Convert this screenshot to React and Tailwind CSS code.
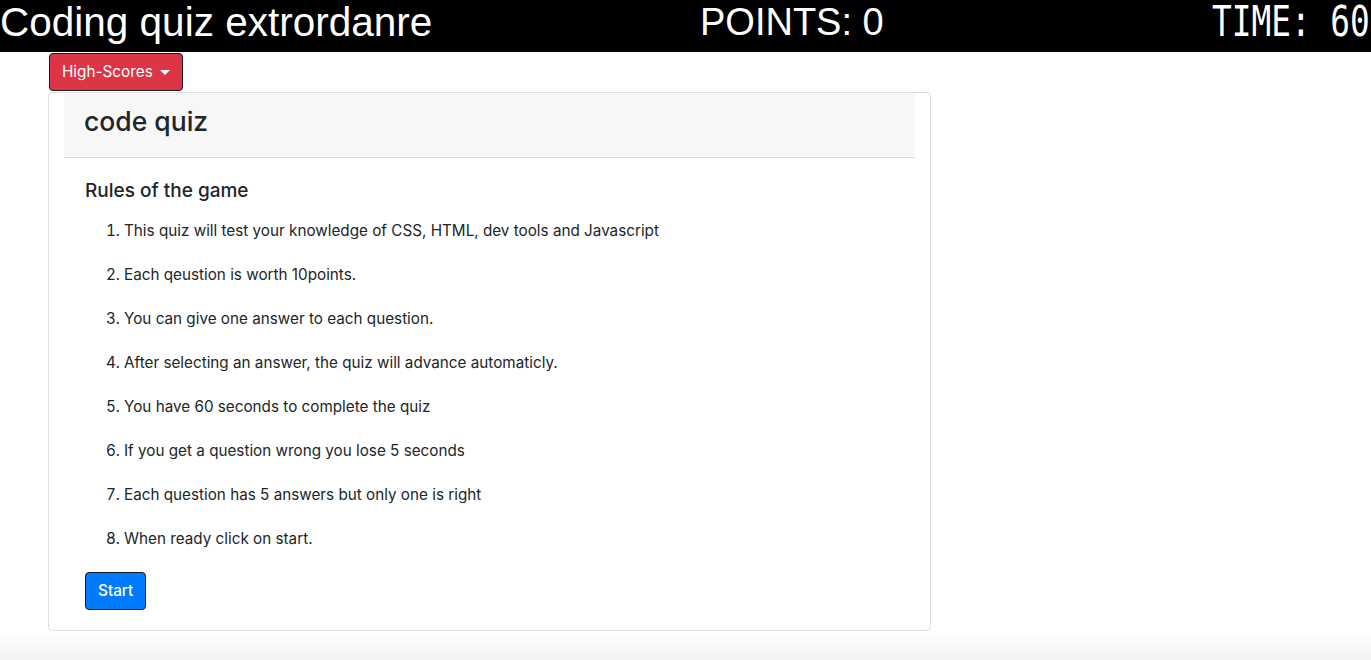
import React from 'react';

const rules = [
    'This quiz will test your knowledge of CSS, HTML, dev tools and Javascript',
    'Each qeustion is worth 10points.',
    'You can give one answer to each question.',
    'After selecting an answer, the quiz will advance automaticly.',
    'You have 60 seconds to complete the quiz',
    'If you get a question wrong you lose 5 seconds',
    'Each question has 5 answers but only one is right',
    'When ready click on start.',
];

const App = () => {
    return (
        <div className="min-h-[660px] bg-white overflow-hidden font-['Inter','Liberation_Sans',sans-serif] text-[#212529]">
            {/* top bar */}
            <header className="h-[52px] bg-black text-white flex items-center overflow-hidden whitespace-nowrap">
                <h1 className="w-[700px] shrink-0 text-[40.5px] leading-none font-['Liberation_Sans',sans-serif] -mt-[8px]">
                    Coding quiz extrordanre
                </h1>
                <div className="w-[512px] shrink-0 text-[38px] leading-none font-['Liberation_Sans',sans-serif] -mt-[8px]">
                    POINTS: 0
                </div>
                <div className="shrink-0 text-[42px] leading-none font-['DejaVu_Sans_Mono',monospace] font-light scale-x-[0.78] origin-left -mt-[8px]">
                    TIME: 60
                </div>
            </header>

            <main className="pl-[48px] w-[931px]">
                <button className="ml-[1px] mt-[1px] h-[38px] px-[12px] flex items-center gap-[7px] rounded-[4px] border border-[#1b1b1b] bg-[#dc3545] text-white text-[15.3px]">
                    High-Scores
                    <span className="w-0 h-0 border-l-[5px] border-r-[5px] border-t-[5px] border-l-transparent border-r-transparent border-t-white mt-[1px]" />
                </button>

                <section className="mt-[1px] border border-[#dfdfdf] rounded-[4px] pb-[20px]">
                    <div className="mx-[15px] h-[65px] bg-[#f7f7f7] border-b border-[#dcdcdc] flex items-center px-[20px]">
                        <h2 className="text-[26.5px] font-medium -mt-[6px]">code quiz</h2>
                    </div>
                    <div className="px-[36px] pt-[21px]">
                        <h3 className="text-[19px] font-medium leading-[24px]">Rules of the game</h3>
                        <ol className="list-decimal pl-[39px] mt-[16px] text-[15.25px] leading-[24px]">
                            {rules.map((r) => (
                                <li key={r} className="mb-[20px]">{r}</li>
                            ))}
                        </ol>
                        <button className="h-[38px] px-[12px] rounded-[4px] border border-[#1b1b1b] bg-[#007bff] text-white text-[15.3px] font-medium mt-[1px]">
                            Start
                        </button>
                    </div>
                </section>
            </main>
            <div className="h-[30px] bg-gradient-to-b from-white to-[#f3f3f3]" />
        </div>
    );
};

export default App;
